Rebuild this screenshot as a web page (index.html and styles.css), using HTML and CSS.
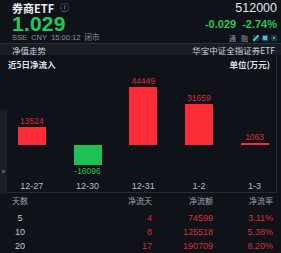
FILE: index.html
```html
<!DOCTYPE html>
<html>
<head>
  <meta charset="utf-8">
  <title>券商ETF</title>
  <link rel="stylesheet" href="styles.css">
</head>
<body>
  <div class="panel">
    <div class="quote">
      <div class="row top">
        <div class="name">券商ETF<span class="info">ⓘ</span></div>
        <div class="code">512000</div>
      </div>
      <div class="row mid">
        <div class="price">1.029</div>
        <div class="change"><span>-0.029</span><span>-2.74%</span></div>
      </div>
      <div class="row bottom">
        <div class="meta">SSE&nbsp;&nbsp;CNY&nbsp;&nbsp;15:00:12&nbsp;&nbsp;闭市</div>
        <div class="tools">
          <span class="tag">通</span>
          <span class="tag">融</span>
          <span class="tool pen"></span>
          <span class="tool dot"></span>
          <span class="tool small"></span>
        </div>
      </div>
    </div>

    <div class="tabbar">
      <span>净值走势</span>
      <span>华宝中证全指证券ETF</span>
    </div>

    <div class="chart">
      <div class="chart-head">
        <span>近5日净流入</span>
        <span>单位(万元)</span>
      </div>
      <div class="plot">
        <div class="col">
          <div class="up"><span class="val red">13524</span><div class="bar red-bar" style="height: 18px"></div></div>
          <div class="down"></div>
          <div class="date">12-27</div>
        </div>
        <div class="col">
          <div class="up"></div>
          <div class="down"><div class="bar green-bar" style="height: 20px"></div><span class="val green">-16096</span></div>
          <div class="date">12-30</div>
        </div>
        <div class="col">
          <div class="up"><span class="val red">44449</span><div class="bar red-bar" style="height: 58px"></div></div>
          <div class="down"></div>
          <div class="date">12-31</div>
        </div>
        <div class="col">
          <div class="up"><span class="val red">31659</span><div class="bar red-bar" style="height: 41px"></div></div>
          <div class="down"></div>
          <div class="date">1-2</div>
        </div>
        <div class="col">
          <div class="up"><span class="val red">1063</span><div class="bar red-bar" style="height: 2px"></div></div>
          <div class="down"></div>
          <div class="date">1-3</div>
        </div>
      </div>
      <div class="handle">»</div>
    </div>

    <div class="table">
      <div class="thead">
        <span class="c1">天数</span>
        <span>净流天</span>
        <span>净流额</span>
        <span>净流率</span>
      </div>
      <div class="trow">
        <span class="c1">5</span>
        <span>4</span>
        <span>74599</span>
        <span>3.11%</span>
      </div>
      <div class="trow">
        <span class="c1">10</span>
        <span>8</span>
        <span>125518</span>
        <span>5.38%</span>
      </div>
      <div class="trow">
        <span class="c1">20</span>
        <span>17</span>
        <span>190709</span>
        <span>8.20%</span>
      </div>
    </div>
  </div>
</body>
</html>
```

FILE: styles.css
```css
html, body {
  margin: 0;
  padding: 0;
  background-color: #0f1218;
  overflow: hidden;
}

.panel {
  width: 281px;
  height: 253px;
  position: relative;
  font-family: "Liberation Sans", "Noto Sans CJK SC", sans-serif;
  color: #d6d8dc;
}

.quote {
  height: 42px;
  padding: 1px 4px 0 12px;
  box-sizing: border-box;
}

.row {
  display: flex;
  justify-content: space-between;
  align-items: center;
}

.row.top {
  height: 14px;
}

.row.mid {
  height: 18px;
}

.row.bottom {
  height: 9px;
}

.name {
  font-family: "Noto Sans CJK SC", sans-serif;
  font-size: 11px;
  font-weight: bold;
  color: #eceef1;
  line-height: 14px;
  display: flex;
  align-items: center;
}

.info {
  font-weight: normal;
  font-size: 9px;
  line-height: 10px;
  color: #9a9ea6;
  margin-left: 6px;
}

.code {
  font-size: 12.5px;
  color: #e2e4e8;
  line-height: 14px;
}

.price {
  font-size: 21px;
  font-weight: bold;
  color: #1fc95a;
  line-height: 18px;
  letter-spacing: 0.2px;
}

.change {
  display: flex;
  gap: 6px;
  font-size: 11px;
  font-weight: bold;
  color: #1fc95a;
  line-height: 12px;
}

.meta {
  font-size: 7.5px;
  color: #8d929b;
  line-height: 9px;
}

.tools {
  display: flex;
  align-items: center;
  gap: 3px;
}

.tag {
  font-family: "Noto Sans CJK SC", sans-serif;
  font-size: 7px;
  color: #8d929b;
  line-height: 8px;
  margin-right: 2px;
}

.tool {
  display: inline-block;
  width: 6px;
  height: 6px;
  background-color: #1c3a4a;
}

.pen {
  background: linear-gradient(135deg, #1c3a4a 40%, #3cb8e6 40%, #3cb8e6 60%, #1c3a4a 60%);
}

.dot {
  background-color: #30c8e8;
  box-shadow: inset 0 0 0 1px #1c5668;
}

.small {
  background-color: #1c3a4a;
  box-shadow: inset 0 0 0 2px #1c3a4a, inset 0 0 0 3px #2bb6c8;
}

.tabbar {
  display: flex;
  justify-content: space-between;
  align-items: center;
  height: 11px;
  margin-top: 1px;
  padding: 0 6px 0 12px;
  background-color: #1a1d24;
  border-top: 1px solid #2b2f37;
  font-family: "Noto Sans CJK SC", sans-serif;
  font-size: 8.5px;
  color: #cfd2d7;
}

.chart {
  height: 138px;
  box-sizing: border-box;
  border-right: 1px solid #262a31;
  border-bottom: 1px solid #262a31;
  margin-right: 4px;
}

.chart-head {
  display: flex;
  justify-content: space-between;
  padding: 3px 6px 0 8px;
  height: 12px;
  font-family: "Noto Sans CJK SC", sans-serif;
  font-size: 8.5px;
  font-weight: bold;
  color: #dfe1e5;
  line-height: 12px;
}

.plot {
  display: grid;
  grid-template-columns: repeat(5, 55.7px);
  padding-left: 4px;
}

.col {
  display: flex;
  flex-direction: column;
  align-items: center;
}

.up {
  height: 75px;
  display: flex;
  flex-direction: column;
  justify-content: flex-end;
  align-items: center;
}

.down {
  height: 35px;
  display: flex;
  flex-direction: column;
  align-items: center;
}

.bar {
  width: 28px;
}

.red-bar {
  background-color: #fb2c36;
}

.green-bar {
  background-color: #1ec254;
}

.val {
  font-size: 8.5px;
  line-height: 10px;
  margin: 1px 0;
}

.red {
  color: #d72d37;
}

.green {
  color: #1ec254;
}

.date {
  font-size: 9px;
  color: #b9bcc2;
  line-height: 10px;
  margin-top: 1px;
}

.handle {
  position: absolute;
  left: 0;
  top: 110px;
  width: 7px;
  height: 84px;
  background-color: #1b1e24;
  color: #8d929b;
  font-size: 7px;
  display: flex;
  align-items: center;
  justify-content: center;
  padding-top: 38px;
  box-sizing: border-box;
}

.table {
  padding: 2px 8px 0 10px;
  font-size: 9px;
}

.thead,
.trow {
  display: grid;
  grid-template-columns: 20px 1fr 61px 60px;
  text-align: right;
}

.thead {
  font-family: "Noto Sans CJK SC", sans-serif;
  font-size: 8px;
  color: #9da1a9;
  height: 12px;
  line-height: 12px;
  margin-bottom: 4px;
}

.trow {
  height: 14px;
  line-height: 14px;
  color: #d72d37;
}

.c1 {
  text-align: center;
  color: #c6c9ce;
}

.thead .c1 {
  color: #9da1a9;
}
```
